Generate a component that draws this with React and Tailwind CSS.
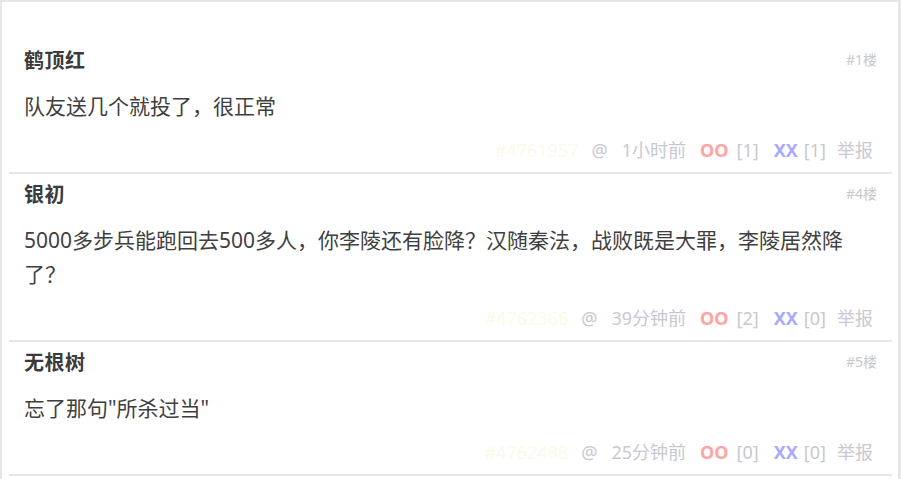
const comments = [
  {
    name: "鹤顶红",
    floor: "#1楼",
    text: "队友送几个就投了，很正常",
    id: "#4761957",
    time: "1小时前",
    oo: 1,
    xx: 1,
  },
  {
    name: "银初",
    floor: "#4楼",
    text: "5000多步兵能跑回去500多人，你李陵还有脸降？汉随秦法，战败既是大罪，李陵居然降了？",
    id: "#4762366",
    time: "39分钟前",
    oo: 2,
    xx: 0,
  },
  {
    name: "无根树",
    floor: "#5楼",
    text: "忘了那句\"所杀过当\"",
    id: "#4762488",
    time: "25分钟前",
    oo: 0,
    xx: 0,
  },
];

const font = { fontFamily: '"Noto Sans", "Noto Sans CJK SC", sans-serif' };

export default function App() {
  return (
    <div className="w-[901px] h-[479px] overflow-hidden bg-white" style={font}>
      <div className="h-full border-l-2 border-t-2 border-r-[3px] border-[#e6e6e6] pt-[38px] pl-[7px] pr-[6px]">
        <ol>
          {comments.map((c) => (
            <li key={c.floor} className="border-b-2 border-[#e6e6e6] px-[15px] pt-[8px] pb-[10px]">
              <div className="flex justify-between items-center h-[26px]">
                <span className="text-[20px] font-bold text-[#3b3b3b] tracking-[0.5px]">{c.name}</span>
                <span className="text-[14px] text-[#c9c9c9] -mt-[4px]">{c.floor}</span>
              </div>
              <p className="mt-[15px] text-[21px] leading-[34px] text-[#3f3f3f]">{c.text}</p>
              <div className="mt-[15px] h-[24px] flex justify-end items-center text-[18px] text-[#c8c8d0] pr-[4px]">
                <span className="text-[#fcfaea]">{c.id}</span>
                <span className="ml-[13px]">@</span>
                <span className="ml-[14px]">{c.time}</span>
                <span className="ml-[14px] font-bold text-[#ffa3a3]">OO</span>
                <span className="ml-[8px]">[{c.oo}]</span>
                <span className="ml-[15px] font-bold text-[#aaaaff]">XX</span>
                <span className="ml-[6px]">[{c.xx}]</span>
                <span className="ml-[11px]">举报</span>
              </div>
            </li>
          ))}
        </ol>
      </div>
    </div>
  );
}
